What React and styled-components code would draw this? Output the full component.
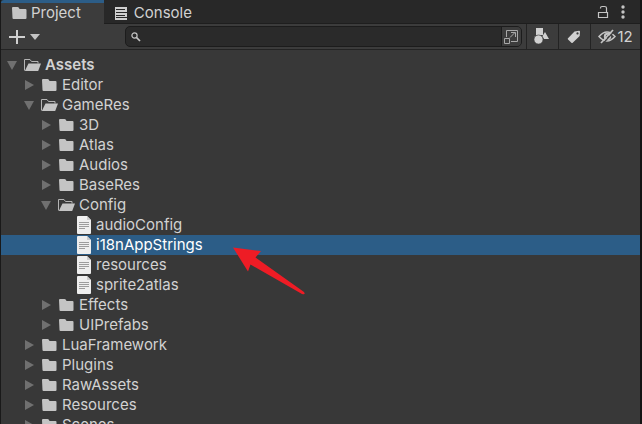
import React, { useState } from 'react';
import styled, { createGlobalStyle } from 'styled-components';

const GlobalStyle = createGlobalStyle`
  body {
    margin: 0;
    background: #383838;
  }
  * {
    box-sizing: border-box;
  }
  button, input {
    font: inherit;
    color: inherit;
  }
`;

const Window = styled.div`
  position: relative;
  display: flex;
  flex-direction: column;
  height: 100vh;
  overflow: hidden;
  background: #383838;
  border-left: 1px solid #191919;
  border-right: 2px solid #141414;
  color: #d2d2d2;
  font-family: Inter, 'Liberation Sans', sans-serif;
  font-size: 15px;
  line-height: 20px;
`;

const TabBar = styled.div`
  display: flex;
  height: 24px;
  flex-shrink: 0;
  background: #282828;
`;

const Tab = styled.button`
  display: flex;
  align-items: center;
  gap: 4px;
  padding: 0 23px 0 10px;
  border: none;
  border-top: 3px solid ${(props) => (props.$active ? '#2c5d87' : '#282828')};
  border-bottom: 1px solid ${(props) => (props.$active ? '#3c3c3c' : '#1e1e1e')};
  border-top-left-radius: 3px;
  background: ${(props) => (props.$active ? '#3c3c3c' : '#282828')};
`;

const TabIcon = styled.span`
  display: flex;
  width: 16px;
  justify-content: center;
`;

const TabTools = styled.div`
  display: flex;
  flex: 1;
  align-items: center;
  justify-content: flex-end;
  gap: 12px;
  padding-right: 15px;
  border-bottom: 1px solid #1e1e1e;
`;

const IconButton = styled.button`
  display: flex;
  padding: 0;
  border: none;
  background: none;
`;

const Toolbar = styled.div`
  display: flex;
  height: 26px;
  flex-shrink: 0;
  align-items: center;
  background: #3c3c3c;
  border-bottom: 1px solid #232323;
`;

const AddButton = styled(IconButton)`
  align-items: center;
  gap: 5px;
  width: 124px;
  padding-left: 8px;
`;

const SearchBox = styled.div`
  display: flex;
  flex: 1;
  height: 21px;
  margin-right: 4px;
  align-items: center;
  overflow: hidden;
  background: #2a2a2a;
  border: 1px solid #1c1c1c;
  border-radius: 5px;
`;

const SearchLabel = styled.label`
  display: flex;
  flex: 1;
  align-items: center;
  gap: 4px;
  padding-left: 5px;
`;

const SearchInput = styled.input`
  flex: 1;
  min-width: 0;
  padding: 0;
  border: none;
  outline: none;
  background: none;
`;

const PickerButton = styled(IconButton)`
  width: 20px;
  height: 100%;
  align-items: center;
  justify-content: center;
  background: #3c3c3c;
  border-left: 1px solid #1c1c1c;
`;

const FilterButton = styled(IconButton)`
  width: ${(props) => (props.$wide ? '50px' : '32px')};
  height: 100%;
  align-items: center;
  justify-content: center;
  gap: 1px;
  border-left: 1px solid #232323;
`;

const Tree = styled.ul`
  flex: 1;
  min-height: 0;
  margin: 0;
  padding: 5px 0 0;
  overflow: hidden;
  list-style: none;
`;

const Row = styled.li`
  display: flex;
  height: 20px;
  align-items: center;
  padding-left: ${(props) => 5 + props.$depth * 17}px;
  background: ${(props) => (props.$selected ? '#2c5d87' : 'transparent')};
  color: ${(props) => (props.$selected ? '#ffffff' : '#d2d2d2')};
  font-weight: ${(props) => (props.$depth === 0 ? 600 : 400)};
`;

const Toggle = styled(IconButton)`
  width: 18px;
  flex-shrink: 0;
`;

const ItemIcon = styled.span`
  display: flex;
  width: 21px;
  flex-shrink: 0;
`;

const Pointer = styled.svg`
  position: absolute;
  left: 232px;
  top: 247px;
  pointer-events: none;
`;

const FolderIcon = () => (
  <svg width="16" height="14" viewBox="0 0 16 14" fill="#c4c4c4">
    <path d="M1 2q0-1 1-1h4.500q1 0 1.500 1l.5 1h6q1 0 1 1v8q0 1-1 1h-12q-1 0-1-1z" />
  </svg>
);

const OpenFolderIcon = () => (
  <svg width="18" height="14" viewBox="0 0 18 14">
    <path d="M.5 12.500V1.500h5.500l1.500 2h6.500v2" fill="none" stroke="#b4b4b4" />
    <path d="M4.500 5.500H17L14.200 13H.8z" fill="#c4c4c4" />
  </svg>
);

const FileIcon = () => (
  <svg width="17" height="20" viewBox="0 0 17 20">
    <path d="M2 2q0-1 1-1h9l4 4v13q0 1-1 1H3q-1 0-1-1z" fill="#eeeeee" />
    <path d="M12 1v4h4z" fill="#cccccc" />
    <path d="M4 7.500h10M4 9.500h10M4 11.500h10M4 13.500h6" stroke="#9c9c9c" />
  </svg>
);

const Triangle = ({ open }) => (
  <svg width="12" height="12" viewBox="0 0 12 12" fill="#707070">
    <path d={open ? 'M1 2h10L6 11z' : 'M2 1l9 5-9 5z'} />
  </svg>
);

const ConsoleIcon = () => (
  <svg width="13" height="13" viewBox="0 0 13 13">
    <path d="M0 0h12v13H0z" fill="#d0d0d0" />
    <path d="M1 2.500h9M1 5.500h11M1 8.500h9M1 10.500h11" stroke="#282828" />
  </svg>
);

const LockIcon = () => (
  <svg width="12" height="14" viewBox="0 0 12 14" fill="none" stroke="#c4c4c4">
    <path d="M1.500 7.500h9v5h-9zM3.500 3.500V3q0-1.500 1.500-1.500h2.500Q9.500 1.500 9.500 3v4.500" strokeWidth="1.200" />
  </svg>
);

const MenuIcon = () => (
  <svg width="4" height="14" viewBox="0 0 4 14" fill="#c4c4c4">
    <circle cx="2" cy="2" r="1.700" />
    <circle cx="2" cy="7" r="1.700" />
    <circle cx="2" cy="12" r="1.700" />
  </svg>
);

const PlusIcon = () => (
  <svg width="16" height="16" viewBox="0 0 16 16">
    <path d="M8 1v14M0 8h16" stroke="#d0d0d0" strokeWidth="2" />
  </svg>
);

const CaretIcon = () => (
  <svg width="10" height="6" viewBox="0 0 10 6" fill="#c4c4c4">
    <path d="M0 0h10L5 6z" />
  </svg>
);

const SearchIcon = () => (
  <svg width="10" height="10" viewBox="0 0 10 10" fill="none" stroke="#c4c4c4">
    <circle cx="3.500" cy="3.500" r="2.600" strokeWidth="1.200" />
    <path d="M5.500 5.500L9 9" strokeWidth="1.700" />
  </svg>
);

const PickerIcon = () => (
  <svg width="15" height="15" viewBox="0 0 15 15" fill="none" stroke="#a8a8a8">
    <path d="M2.500 8V1.500h11v11H7M.5 9.500h5v5h-5zM6 8.500l5-5M7 3.500h4.500v4.500" />
  </svg>
);

const ShapesIcon = () => (
  <svg width="17" height="17" viewBox="0 0 17 17" fill="#d0d0d0">
    <path d="M2 0h7v7H2zM11 4l4 7h-5L8.500 8z" />
    <circle cx="4.500" cy="11.500" r="4.500" stroke="#3c3c3c" strokeWidth=".6" />
  </svg>
);

const TagIcon = () => (
  <svg width="16" height="14" viewBox="0 0 16 14">
    <path
      d="M7.500 1.500l4.500-.7q1-.1 1 1l-.3 4.200-7 6.700q-.7.600-1.300 0L1 9.500q-.6-.7 0-1.300zM10.500 2.300a1.100 1.100 0 1 0 .01 0z"
      fill="#d0d0d0"
      fillRule="evenodd"
    />
  </svg>
);

const HiddenIcon = () => (
  <svg width="18" height="15" viewBox="0 0 18 15" fill="none" stroke="#c4c4c4">
    <path d="M1 7.500Q5 3 9 3t8 4.500q-4 4.500-8 4.500t-8-4.500z" strokeWidth="1.500" />
    <circle cx="9.500" cy="7.500" r="2.700" strokeWidth="2" />
    <path d="M4.500 15L16.500 2" stroke="#3c3c3c" strokeWidth="1.200" />
    <path d="M3 14L15 1" strokeWidth="1.700" />
  </svg>
);

const items = [
  { name: 'Assets', depth: 0, type: 'open' },
  { name: 'Editor', depth: 1, type: 'folder' },
  { name: 'GameRes', depth: 1, type: 'open' },
  { name: '3D', depth: 2, type: 'folder' },
  { name: 'Atlas', depth: 2, type: 'folder' },
  { name: 'Audios', depth: 2, type: 'folder' },
  { name: 'BaseRes', depth: 2, type: 'folder' },
  { name: 'Config', depth: 2, type: 'open' },
  { name: 'audioConfig', depth: 3, type: 'file' },
  { name: 'i18nAppStrings', depth: 3, type: 'file' },
  { name: 'resources', depth: 3, type: 'file' },
  { name: 'sprite2atlas', depth: 3, type: 'file' },
  { name: 'Effects', depth: 2, type: 'folder' },
  { name: 'UIPrefabs', depth: 2, type: 'folder' },
  { name: 'LuaFramework', depth: 1, type: 'folder' },
  { name: 'Plugins', depth: 1, type: 'folder' },
  { name: 'RawAssets', depth: 1, type: 'folder' },
  { name: 'Resources', depth: 1, type: 'folder' },
  { name: 'Scenes', depth: 1, type: 'folder' },
];

const icons = { open: OpenFolderIcon, folder: FolderIcon, file: FileIcon };

const TreeRow = ({ item, selected, onSelect }) => {
  const Icon = icons[item.type];
  const isFile = item.type === 'file';

  return (
    <Row $depth={item.depth} $selected={selected} onClick={onSelect}>
      <Toggle as={isFile ? 'span' : 'button'} aria-label={isFile ? undefined : `Toggle ${item.name}`}>
        {!isFile && <Triangle open={item.type === 'open'} />}
      </Toggle>
      <ItemIcon>
        <Icon />
      </ItemIcon>
      <span>{item.name}</span>
    </Row>
  );
};

const App = () => {
  const [selected, setSelected] = useState('i18nAppStrings');
  const [query, setQuery] = useState('');

  return (
    <>
      <GlobalStyle />
      <Window>
        <TabBar>
          <Tab $active>
            <TabIcon>
              <FolderIcon />
            </TabIcon>
            Project
          </Tab>
          <Tab>
            <TabIcon>
              <ConsoleIcon />
            </TabIcon>
            Console
          </Tab>
          <TabTools>
            <IconButton aria-label="Lock">
              <LockIcon />
            </IconButton>
            <IconButton aria-label="Menu">
              <MenuIcon />
            </IconButton>
          </TabTools>
        </TabBar>
        <Toolbar>
          <AddButton aria-label="Create">
            <PlusIcon />
            <CaretIcon />
          </AddButton>
          <SearchBox>
            <SearchLabel>
              <SearchIcon />
              <SearchInput
                type="text"
                aria-label="Search"
                value={query}
                onChange={(e) => setQuery(e.target.value)}
              />
            </SearchLabel>
            <PickerButton aria-label="Open search window">
              <PickerIcon />
            </PickerButton>
          </SearchBox>
          <FilterButton aria-label="Search by type">
            <ShapesIcon />
          </FilterButton>
          <FilterButton aria-label="Search by label">
            <TagIcon />
          </FilterButton>
          <FilterButton $wide>
            <HiddenIcon />
            12
          </FilterButton>
        </Toolbar>
        <Tree>
          {items.map((item) => (
            <TreeRow
              key={item.name}
              item={item}
              selected={item.name === selected}
              onSelect={() => setSelected(item.name)}
            />
          ))}
        </Tree>
        <Pointer width="74" height="50" viewBox="0 0 74 50" fill="#ee1c25">
          <path d="M0 0.500L28 4L22.500 10.500L71 45Q73 48 69 47L17.500 17.500L15 24.500z" />
        </Pointer>
      </Window>
    </>
  );
};

export default App;
